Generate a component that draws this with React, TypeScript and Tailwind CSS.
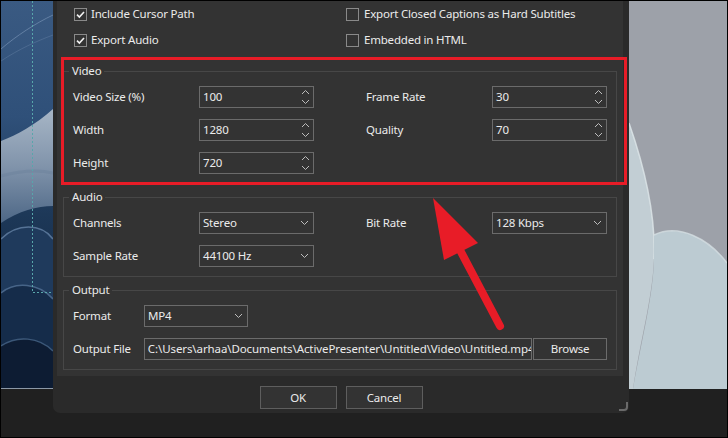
import React from "react";

const Check = ({ checked }: { checked: boolean }) => (
  <div className="w-[13px] h-[13px] border border-[#8a8a8a] flex items-center justify-center shrink-0">
    {checked && (
      <svg width="11" height="11" viewBox="0 0 11 11">
        <path d="M2 5.6 L4.4 8 L9 3" fill="none" stroke="#f2f2f2" strokeWidth="1.6" />
      </svg>
    )}
  </div>
);

const SpinArrows = () => (
  <svg width="9" height="16" viewBox="0 0 9 16" className="shrink-0">
    <path d="M1 5 L4.5 1.5 L8 5" fill="none" stroke="#bdbdbd" strokeWidth="1" />
    <path d="M1 11 L4.5 14.5 L8 11" fill="none" stroke="#bdbdbd" strokeWidth="1" />
  </svg>
);

const Chevron = () => (
  <svg width="9" height="6" viewBox="0 0 9 6" className="shrink-0">
    <path d="M1 1 L4.5 4.5 L8 1" fill="none" stroke="#bdbdbd" strokeWidth="1" />
  </svg>
);

const Spin = ({ value }: { value: string }) => (
  <div className="h-[22px] border border-[#6b6b6b] bg-[#333333] flex items-center justify-between pl-[3px] pr-[3px]">
    <span>{value}</span>
    <SpinArrows />
  </div>
);

const Combo = ({ value, w }: { value: string; w?: string }) => (
  <div className={`h-[22px] border border-[#6b6b6b] bg-[#333333] flex items-center justify-between pl-[3px] pr-[4px] ${w ?? ""}`}>
    <span>{value}</span>
    <Chevron />
  </div>
);

const Group = ({ title, children }: { title: string; children: React.ReactNode }) => (
  <fieldset className="border border-[#474747] min-w-0">
    <legend className="ml-[5px] px-[3px] leading-[16px]">{title}</legend>
    <div className="pt-[7px] pb-[9px] pl-[9px] pr-[9px]">{children}</div>
  </fieldset>
);

const Label = ({ children }: { children: React.ReactNode }) => (
  <div className="h-[22px] flex items-center">{children}</div>
);

const LeftWall = () => (
  <div className="w-[52px] h-[388px] shrink-0 border-b border-[#8c98a6] overflow-hidden">
    <svg width="52" height="387" viewBox="0 0 52 387">
      <defs>
        <linearGradient id="lw" x1="0" y1="0" x2="0" y2="1">
          <stop offset="0" stopColor="#3a5a82" />
          <stop offset="0.3" stopColor="#2f5079" />
          <stop offset="0.55" stopColor="#1d3858" />
          <stop offset="1" stopColor="#0e1d33" />
        </linearGradient>
        <linearGradient id="ls" x1="0" y1="0" x2="0" y2="1">
          <stop offset="0" stopColor="#a7b6c6" />
          <stop offset="0.5" stopColor="#8194ab" />
          <stop offset="1" stopColor="#4d6786" />
        </linearGradient>
      </defs>
      <rect width="52" height="387" fill="url(#lw)" />
      <path d="M0 48 C15 35 35 22 52 14" fill="none" stroke="#7f9abb" strokeWidth="1" opacity="0.6" />
      <path d="M0 60 C18 48 36 40 52 34" fill="none" stroke="#6c88aa" strokeWidth="1" opacity="0.4" />
      <path d="M52 108 C34 124 16 134 0 140 L0 222 C18 210 36 205 52 205 Z" fill="url(#ls)" />
      <path d="M0 175 C18 170 36 168 52 172" fill="none" stroke="#6b819c" strokeWidth="3" opacity="0.5" />
      <path d="M0 238 C16 222 40 222 52 238 L52 387 L0 387 Z" fill="#1f3a5c" />
      <path d="M0 238 C16 222 40 222 52 238" fill="none" stroke="#6f8db0" strokeWidth="1.5" opacity="0.7" />
      <path d="M0 292 C14 280 38 282 52 298 L52 387 L0 387 Z" fill="#152c4a" />
      <path d="M0 292 C14 280 38 282 52 298" fill="none" stroke="#5b7aa0" strokeWidth="1.5" opacity="0.7" />
      <path d="M0 345 C16 334 38 336 52 350 L52 387 L0 387 Z" fill="#0d1c33" />
      <path d="M0 345 C16 334 38 336 52 350" fill="none" stroke="#4f6d92" strokeWidth="1.5" opacity="0.7" />
      <path d="M31.5 0 L31.5 291.5 L52 291.5" fill="none" stroke="#58a6ab" strokeWidth="1" strokeDasharray="2 2" />
    </svg>
  </div>
);

const RightWall = () => (
  <div className="flex-1 h-[388px] overflow-hidden">
    <svg width="98" height="388" viewBox="0 0 98 388">
      <rect width="98" height="388" fill="#9da1a9" />
      <path d="M0 122 C14 162 27 212 25 258 C23 300 12 335 4 388 L0 388 Z" fill="#c2ced4" />
      <path d="M0 122 C14 162 27 212 25 258" fill="none" stroke="#dfe7ea" strokeWidth="1.5" opacity="0.8" />
      <path d="M25 234 C50 222 80 238 98 262 L98 388 L4 388 C14 332 24 296 25 258 Z" fill="#bccbd2" />
      <path d="M25 234 C50 222 80 238 98 262" fill="none" stroke="#d6e0e4" strokeWidth="1.5" opacity="0.8" />
    </svg>
  </div>
);

export default function App() {
  return (
    <div className="relative w-[728px] h-[438px] bg-[#202020] border border-black overflow-hidden font-['Noto_Sans',sans-serif] text-[11.5px] tracking-[-0.2px] text-[#ebebeb]">
      <div className="flex items-start">
        <LeftWall />
        <div className="w-[576px] h-[412px] shrink-0 bg-[#2a2a2a] rounded-b-[7px] flex flex-col relative">
          <div className="ml-[4px] w-[566px] bg-[#333333] px-[6px] pt-[3px] pb-[6px]">
            <div className="grid grid-cols-[272px_1fr] gap-y-[6px] pl-[11px]">
              <div className="h-[20px] flex items-center gap-[4px]">
                <Check checked />
                <span>Include Cursor Path</span>
              </div>
              <div className="h-[20px] flex items-center gap-[5px]">
                <Check checked={false} />
                <span>Export Closed Captions as Hard Subtitles</span>
              </div>
              <div className="h-[20px] flex items-center gap-[4px]">
                <Check checked />
                <span>Export Audio</span>
              </div>
              <div className="h-[20px] flex items-center gap-[5px]">
                <Check checked={false} />
                <span>Embedded in HTML</span>
              </div>
            </div>
            <div className="mt-[13px] flex flex-col gap-[5px]">
              <Group title="Video">
                <div className="grid grid-cols-[126px_115px_52px_126px_115px] gap-y-[11px]">
                  <Label>Video Size (%)</Label>
                  <Spin value="100" />
                  <div />
                  <Label>Frame Rate</Label>
                  <Spin value="30" />
                  <Label>Width</Label>
                  <Spin value="1280" />
                  <div />
                  <Label>Quality</Label>
                  <Spin value="70" />
                  <Label>Height</Label>
                  <Spin value="720" />
                </div>
              </Group>
              <Group title="Audio">
                <div className="grid grid-cols-[126px_115px_52px_126px_115px] gap-y-[11px]">
                  <Label>Channels</Label>
                  <Combo value="Stereo" />
                  <div />
                  <Label>Bit Rate</Label>
                  <Combo value="128 Kbps" />
                  <Label>Sample Rate</Label>
                  <Combo value="44100 Hz" />
                </div>
              </Group>
              <Group title="Output">
                <div className="flex flex-col gap-[11px]">
                  <div className="flex">
                    <div className="w-[71px]"><Label>Format</Label></div>
                    <Combo value="MP4" w="w-[104px]" />
                  </div>
                  <div className="flex">
                    <div className="w-[71px]"><Label>Output File</Label></div>
                    <div className="w-[389px] h-[22px] border border-[#6b6b6b] bg-[#333333] flex items-center pl-[3px] overflow-hidden whitespace-nowrap tracking-[-0.1px]">
                      C:\Users\arhaa\Documents\ActivePresenter\Untitled\Video\Untitled.mp4
                    </div>
                    <div className="ml-[1px] w-[74px] h-[22px] border border-[#6b6b6b] bg-[#333333] flex items-center justify-center">
                      Browse
                    </div>
                  </div>
                </div>
              </Group>
            </div>
          </div>
          <div className="flex justify-center gap-[9px] pt-[10px]">
            <div className="w-[77px] h-[23px] border border-[#5e5e5e] bg-[#333333] flex items-center justify-center">OK</div>
            <div className="w-[77px] h-[23px] border border-[#5e5e5e] bg-[#333333] flex items-center justify-center">Cancel</div>
          </div>
          <svg width="9" height="9" viewBox="0 0 9 9" className="absolute right-[1px] bottom-[2px]">
            <path d="M8 0 L8 5 Q8 8 5 8 L0 8" fill="none" stroke="#6a6a6a" strokeWidth="2" />
          </svg>
        </div>
        <RightWall />
      </div>
      <svg className="absolute inset-0 pointer-events-none" width="726" height="436" viewBox="1 1 726 436">
        <rect x="62.5" y="58.5" width="563" height="125" fill="none" stroke="#e81c27" strokeWidth="3" />
        <line x1="460" y1="250" x2="500" y2="326" stroke="#e81c27" strokeWidth="8" strokeLinecap="round" />
        <polygon points="433,198 444,260 478,243" fill="#e81c27" />
      </svg>
    </div>
  );
}
